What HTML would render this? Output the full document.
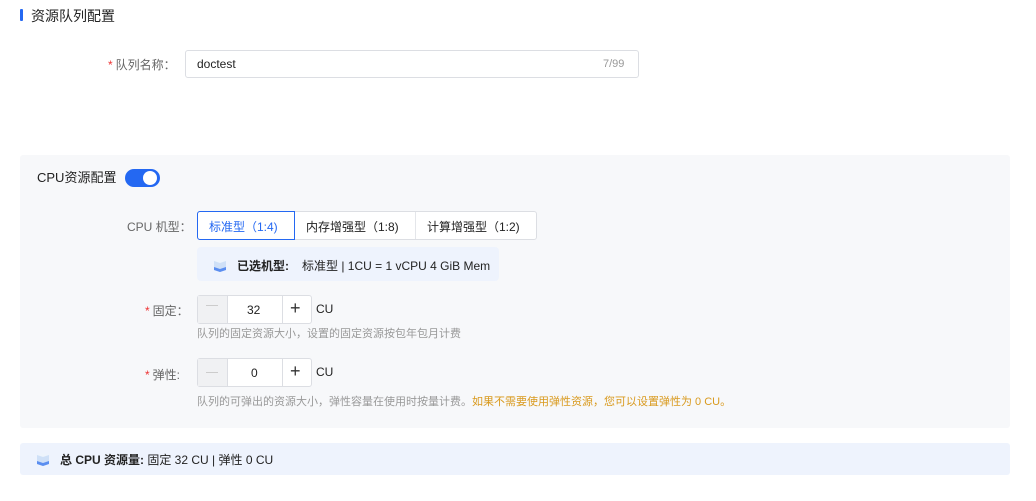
<!DOCTYPE html>
<html><head><meta charset="utf-8"><style>
*{margin:0;padding:0;box-sizing:border-box}
body{width:1036px;height:501px;background:#fff;font-family:"Liberation Sans","Noto Sans CJK SC",sans-serif;color:#333;font-size:12px;position:relative;overflow:hidden}
.a{position:absolute;white-space:nowrap}
.req{color:#e33;margin-right:3px}
.lbl{color:#666;font-size:12px}
</style></head><body>
<div class="a" style="left:20px;top:9px;width:3px;height:12px;background:#2468f2;border-radius:1px"></div>
<div class="a" style="left:31px;top:6px;font-size:14px;color:#222">资源队列配置</div>

<div class="a lbl" style="left:108px;top:56px"><span class="req">*</span>队列名称：</div>
<div class="a" style="left:185px;top:50px;width:454px;height:28px;border:1px solid #dcdee3;border-radius:3px"></div>
<div class="a" style="left:197px;top:57px;font-size:12px;color:#222">doctest</div>
<div class="a" style="left:603px;top:58px;font-size:11px;color:#999">7/99</div>

<div class="a" style="left:20px;top:155px;width:990px;height:273px;background:#f7f8fa;border-radius:3px"></div>
<div class="a" style="left:37px;top:167px;font-size:13px;color:#222">CPU资源配置</div>
<div class="a" style="left:125px;top:169px;width:35px;height:18px;background:#2468f2;border-radius:9px"></div>
<div class="a" style="left:143px;top:171px;width:14px;height:14px;background:#fff;border-radius:50%"></div>

<div class="a lbl" style="left:127px;top:218px">CPU 机型：</div>
<div class="a" style="left:197px;top:211px;width:340px;height:29px;border:1px solid #dcdee3;border-radius:3px;background:#fff"></div>
<div class="a" style="left:415px;top:212px;width:1px;height:27px;background:#e4e6ea"></div>
<div class="a" style="left:197px;top:211px;width:98px;height:29px;border:1px solid #2468f2;border-radius:3px 0 0 3px"></div>
<div class="a" style="left:209px;top:218px;color:#2468f2">标准型（1:4)</div>
<div class="a" style="left:306px;top:218px;color:#222">内存增强型（1:8)</div>
<div class="a" style="left:427px;top:218px;color:#222">计算增强型（1:2)</div>

<div class="a" style="left:197px;top:247px;width:302px;height:34px;background:#eef3fd;border-radius:4px"></div>
<svg class="a" style="left:213px;top:257px" width="14" height="16" viewBox="0 0 14 16"><path d="M1 4h12v9l-6 2-6-2z" fill="#cfe0f7"/><path d="M1 10l6 2 6-2v3l-6 2-6-2z" fill="#5b8ef0"/><path d="M1 4l6-2 6 2-6 2z" fill="#eef4fc"/></svg>
<div class="a" style="left:237px;top:257px;color:#222;font-weight:bold">已选机型:</div>
<div class="a" style="left:302px;top:257px;color:#222">标准型 | 1CU = 1 vCPU 4 GiB Mem</div>

<div class="a lbl" style="left:145px;top:302px"><span class="req">*</span>固定：</div>
<div class="a" style="left:197px;top:295px;width:115px;height:29px;border:1px solid #dcdee3;border-radius:3px;background:#fff"></div>
<div class="a" style="left:198px;top:296px;width:29px;height:27px;background:#f0f1f3"></div>
<div class="a" style="left:282px;top:296px;width:1px;height:27px;background:#dcdee3"></div>
<div class="a" style="left:227px;top:296px;width:1px;height:27px;background:#dcdee3"></div>
<div class="a" style="left:206px;top:305px;width:12px;height:1px;background:#ccc"></div>
<div class="a" style="left:247px;top:303px;color:#222">32</div>
<div class="a" style="left:290px;top:298px;color:#333;font-size:18px">+</div>
<div class="a" style="left:316px;top:302px;color:#222">CU</div>
<div class="a" style="left:197px;top:325px;font-size:11px;color:#999">队列的固定资源大小，设置的固定资源按包年包月计费</div>

<div class="a lbl" style="left:145px;top:366px"><span class="req">*</span>弹性:</div>
<div class="a" style="left:197px;top:358px;width:115px;height:29px;border:1px solid #dcdee3;border-radius:3px;background:#fff"></div>
<div class="a" style="left:198px;top:359px;width:29px;height:27px;background:#f0f1f3"></div>
<div class="a" style="left:282px;top:359px;width:1px;height:27px;background:#dcdee3"></div>
<div class="a" style="left:227px;top:359px;width:1px;height:27px;background:#dcdee3"></div>
<div class="a" style="left:206px;top:372px;width:12px;height:1px;background:#ccc"></div>
<div class="a" style="left:251px;top:366px;color:#222">0</div>
<div class="a" style="left:290px;top:361px;color:#333;font-size:18px">+</div>
<div class="a" style="left:316px;top:365px;color:#222">CU</div>
<div class="a" style="left:197px;top:393px;font-size:11px;color:#999">队列的可弹出的资源大小，弹性容量在使用时按量计费。<span style="color:#d99a1e">如果不需要使用弹性资源，您可以设置弹性为 0 CU。</span></div>

<div class="a" style="left:20px;top:443px;width:990px;height:32px;background:#eef3fd;border-radius:3px"></div>
<svg class="a" style="left:36px;top:451px" width="14" height="16" viewBox="0 0 14 16"><path d="M1 4h12v9l-6 2-6-2z" fill="#cfe0f7"/><path d="M1 10l6 2 6-2v3l-6 2-6-2z" fill="#5b8ef0"/><path d="M1 4l6-2 6 2-6 2z" fill="#eef4fc"/></svg>
<div class="a" style="left:60px;top:451px;color:#222"><b>总 CPU 资源量:</b> 固定 32 CU | 弹性 0 CU</div>
</body></html>
